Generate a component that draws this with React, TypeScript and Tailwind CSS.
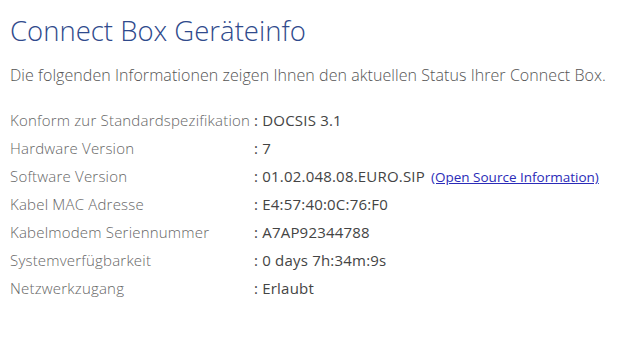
import React from 'react';

type Row = { label: string; value: string; link?: string };

const rows: Row[] = [
  { label: 'Konform zur Standardspezifikation', value: 'DOCSIS 3.1' },
  { label: 'Hardware Version', value: '7' },
  { label: 'Software Version', value: '01.02.048.08.EURO.SIP', link: '(Open Source Information)' },
  { label: 'Kabel MAC Adresse', value: 'E4:57:40:0C:76:F0' },
  { label: 'Kabelmodem Seriennummer', value: 'A7AP92344788' },
  { label: 'Systemverfügbarkeit', value: '0 days 7h:34m:9s' },
  { label: 'Netzwerkzugang', value: 'Erlaubt' },
];

const App: React.FC = () => {
  return (
    <div className="w-[626px] h-[340px] bg-white px-[10px] pt-[13px] font-['Open_Sans',sans-serif]">
      <h1 className="text-[27.5px] leading-[36px] font-light text-[#2f4a8c]">Connect Box Geräteinfo</h1>

      <p className="mt-[15px] text-[16px] leading-[22px] font-light tracking-[0.06px] text-[#555]">
        Die folgenden Informationen zeigen Ihnen den aktuellen Status Ihrer Connect Box.
      </p>

      <div className="mt-[20px] flex flex-col">
        {rows.map((row) => (
          <div key={row.label} className="flex h-[28px] items-center text-[15px] tracking-[0.2px]">
            <span className="w-[244px] font-light text-[#666]">{row.label}</span>
            <span className="text-[#444]">
              : {row.value}
              {row.link && (
                <a href="#" className="ml-[6px] text-[13.5px] tracking-normal text-[#2b2bb8] underline">
                  {row.link}
                </a>
              )}
            </span>
          </div>
        ))}
      </div>
    </div>
  );
};

export default App;
